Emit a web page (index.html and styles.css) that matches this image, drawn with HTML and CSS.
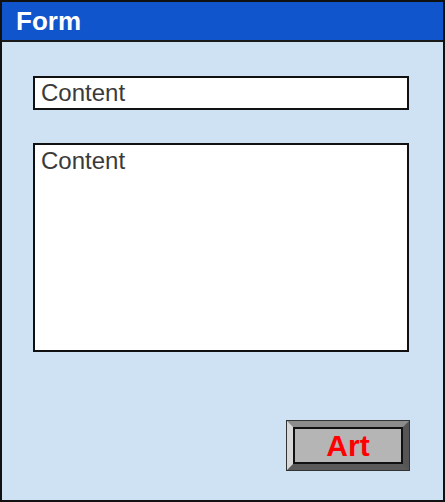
FILE: index.html
```html
<!DOCTYPE html>
<html>
<head>
    <title>Form</title>
    <link rel="stylesheet" href="styles.css">
</head>
<body>
    <div class="window">
        <div class="titlebar">Form</div>
        <div class="content">
            <div class="field">Content</div>
            <div class="area">Content</div>
            <div class="actions">
                <div class="button">Art</div>
            </div>
        </div>
    </div>
</body>
</html>
```
FILE: styles.css
```css
body {
    margin: 0;
    padding: 0;
    font-family: "Liberation Sans", Arial, sans-serif;
}

.window {
    box-sizing: border-box;
    width: 445px;
    height: 502px;
    border: 2px solid #111;
    background-color: #cfe2f3;
    display: flex;
    flex-direction: column;
}

.titlebar {
    height: 38px;
    background-color: #1155cc;
    border-bottom: 2px solid #1a1a1a;
    color: #fff;
    font-weight: bold;
    font-size: 26px;
    line-height: 38px;
    padding-left: 14px;
}

.content {
    flex: 1;
    padding: 34px 34px 0 31px;
    display: flex;
    flex-direction: column;
}

.field {
    box-sizing: border-box;
    height: 34px;
    border: 2px solid #111;
    background-color: #fff;
    color: #3a3a3a;
    font-size: 24px;
    line-height: 30px;
    padding-left: 6px;
}

.area {
    box-sizing: border-box;
    height: 209px;
    margin-top: 33px;
    border: 2px solid #111;
    background-color: #fff;
    color: #3a3a3a;
    font-size: 24px;
    line-height: 30px;
    padding-left: 6px;
    padding-top: 1px;
}

.actions {
    display: flex;
    justify-content: flex-end;
    margin-top: 69px;
}

.button {
    box-sizing: border-box;
    width: 122px;
    height: 49px;
    border: 6px solid;
    border-color: #8c8c8c #555 #5a5a5a #d8d8d8;
    box-shadow: 0 0 0 1px #333, inset 0 0 0 2px #111;
    background-color: #b5b5b5;
    color: #ff0000;
    font-weight: bold;
    font-size: 30px;
    line-height: 37px;
    text-align: center;
}
```
